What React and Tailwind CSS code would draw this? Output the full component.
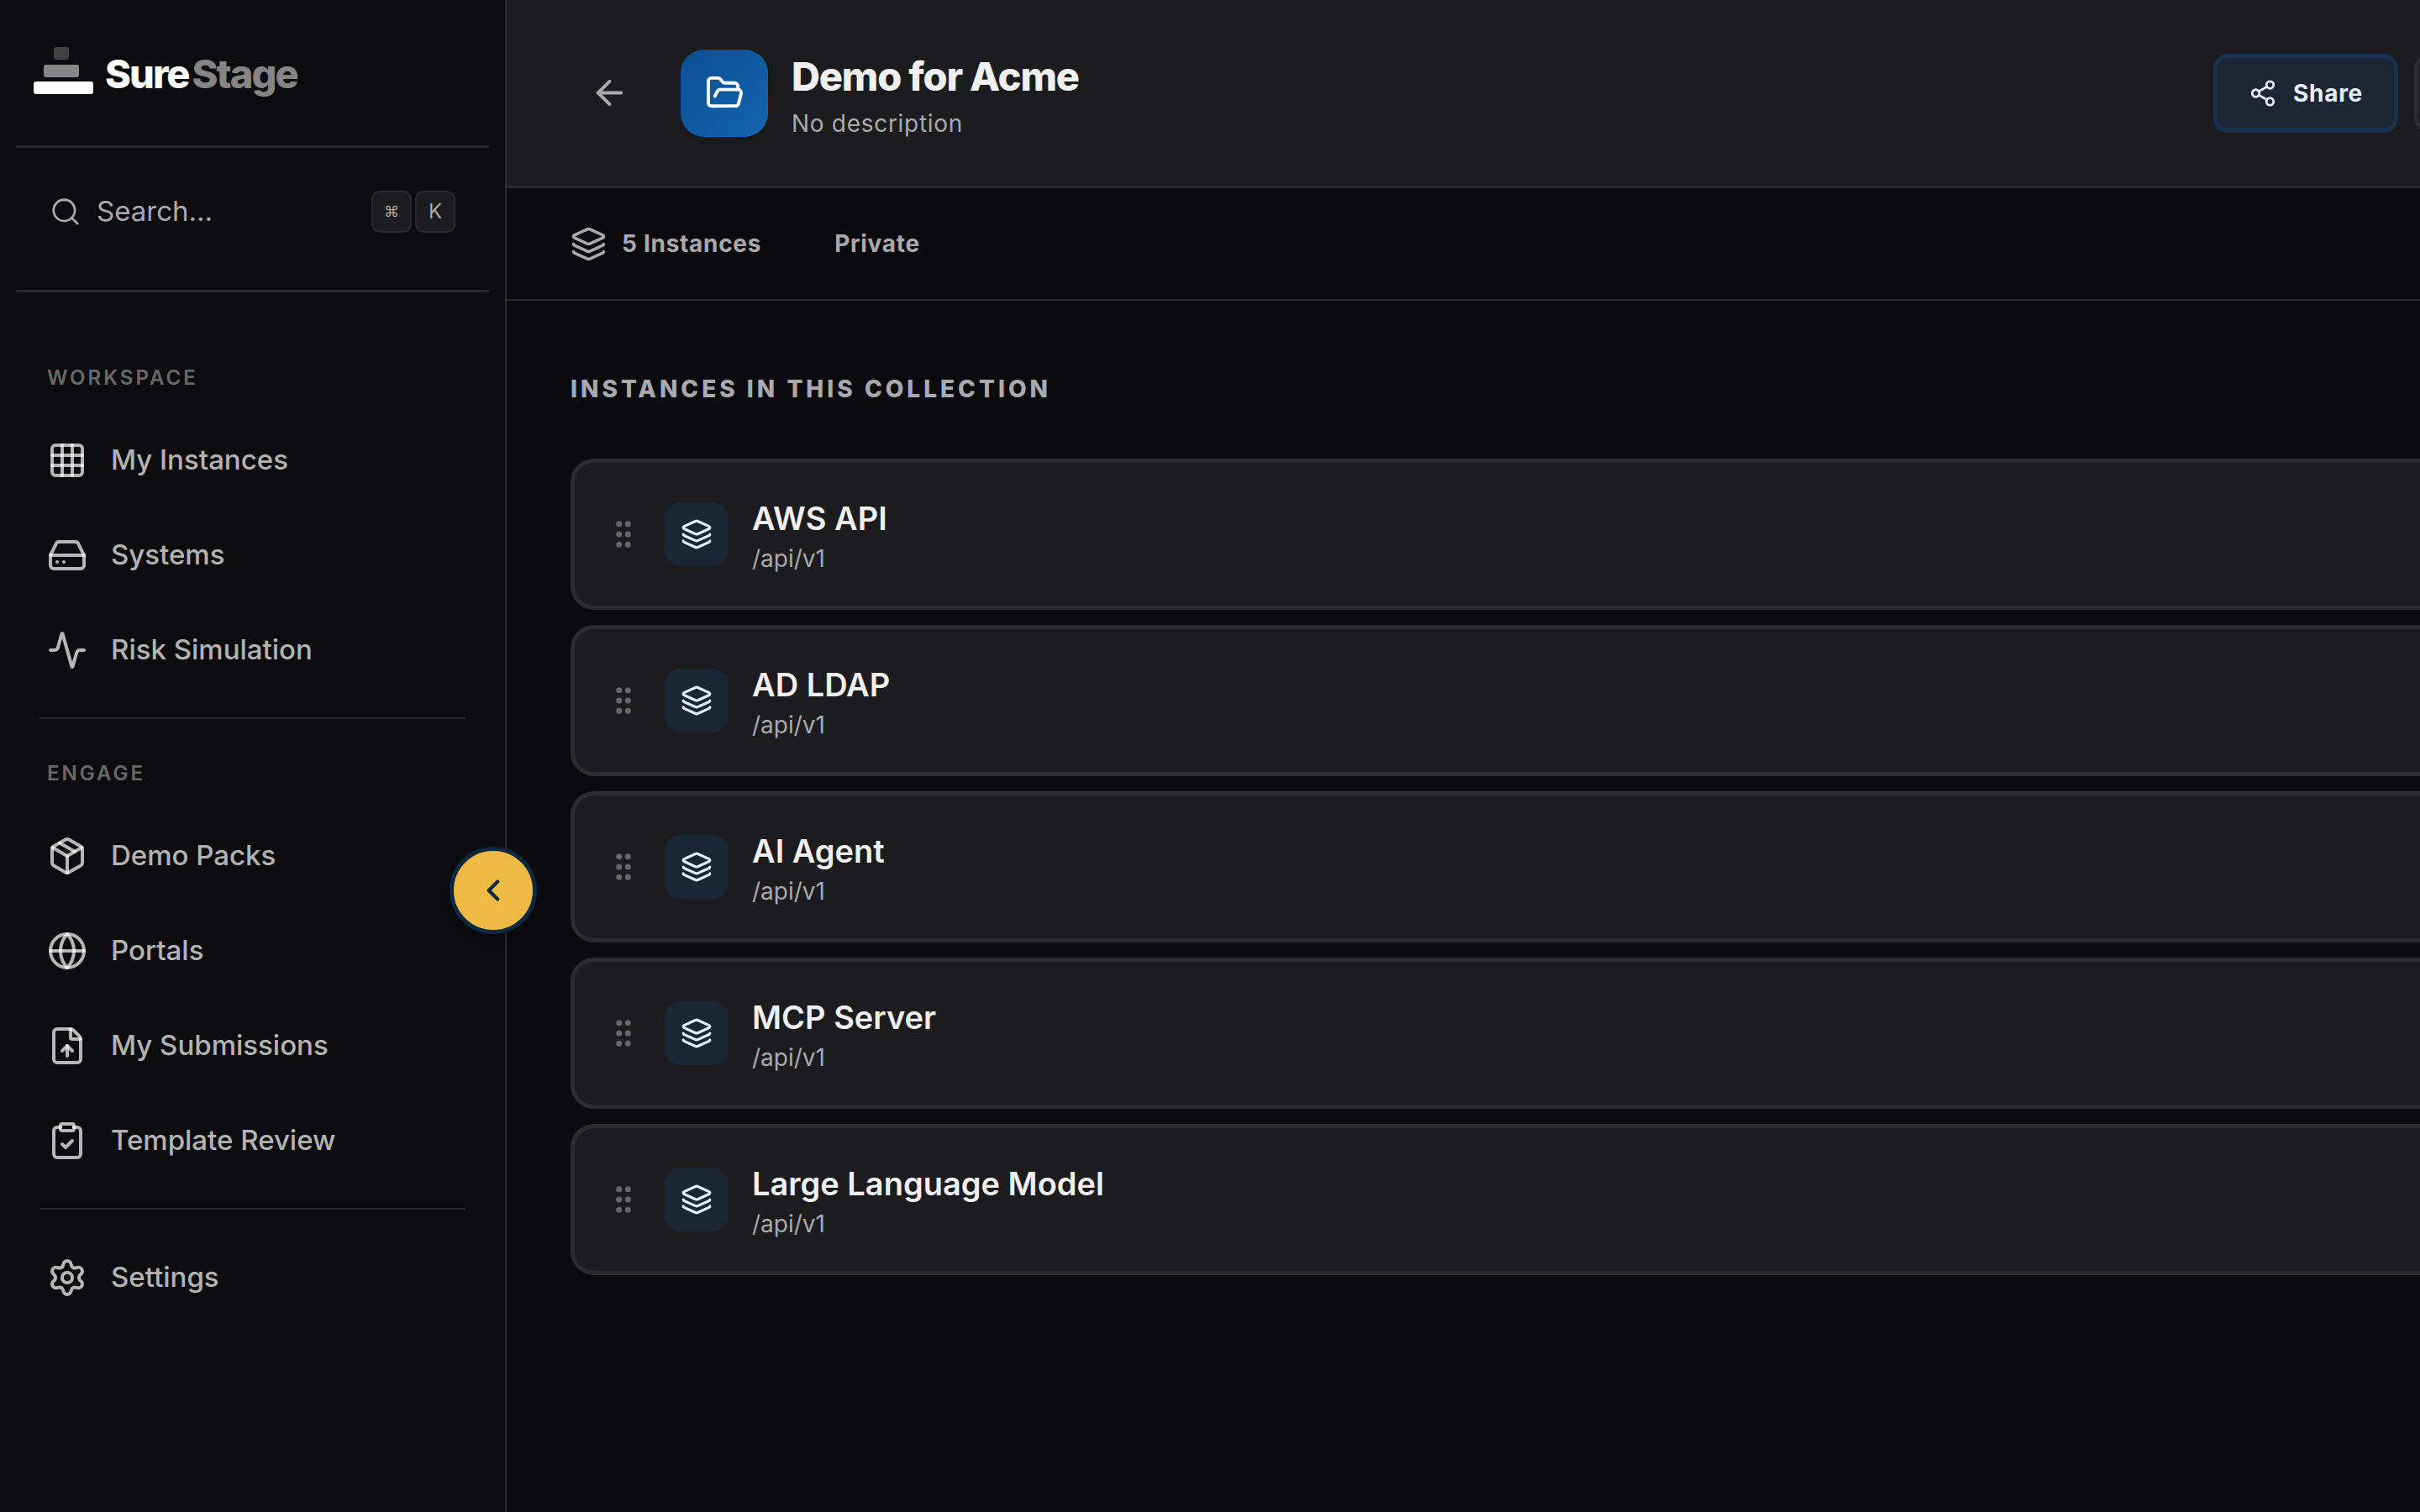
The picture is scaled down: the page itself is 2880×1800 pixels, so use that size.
import {
    Activity,
    ArrowLeft,
    ChevronLeft,
    ClipboardCheck,
    FileUp,
    FolderOpen,
    Globe,
    Grid3x3,
    GripVertical,
    HardDrive,
    Layers,
    Package,
    Search,
    Settings,
    Share2,
} from "lucide-react";

const workspaceLinks = [
    { label: "My Instances", icon: Grid3x3 },
    { label: "Systems", icon: HardDrive },
    { label: "Risk Simulation", icon: Activity },
];

const engageLinks = [
    { label: "Demo Packs", icon: Package },
    { label: "Portals", icon: Globe },
    { label: "My Submissions", icon: FileUp },
    { label: "Template Review", icon: ClipboardCheck },
];

const instances = [
    { name: "AWS API", path: "/api/v1" },
    { name: "AD LDAP", path: "/api/v1" },
    { name: "AI Agent", path: "/api/v1" },
    { name: "MCP Server", path: "/api/v1" },
    { name: "Large Language Model", path: "/api/v1" },
];

const Logo = () => (
    <a href="#" className="flex h-[173px] items-center gap-[14px] px-[21px] text-[47px] font-extrabold tracking-[-2px]">
        <svg width="71" height="62" viewBox="0 0 71 62" aria-hidden="true">
            <rect x="24" y="0" width="18" height="15" rx="3" fill="#414141" />
            <rect x="12" y="21" width="42" height="15" rx="3" fill="#858585" />
            <rect x="0" y="41" width="71" height="15" rx="3" fill="#fff" />
        </svg>
        <span className="flex gap-1 pt-1 text-white">
            Sure<span className="text-[#858585]">Stage</span>
        </span>
    </a>
);

const NavLink = ({ label, icon: Icon }) => (
    <a href="#" className="flex h-[113px] items-center gap-7 px-[9px] text-[33px] font-medium text-white/70">
        <Icon size={48} strokeWidth={2} />
        {label}
    </a>
);

const NavHeading = ({ children }) => (
    <h2 className="px-[9px] text-2xl leading-[82px] font-semibold tracking-[3px] text-white/40">
        {children}
    </h2>
);

const Divider = () => <hr className="my-6 border-t-2 border-[#28282a]" />;

const Kbd = ({ children }) => (
    <kbd className="flex h-[50px] w-12 items-center justify-center rounded-[10px] border-2 border-[#2a2a2c] bg-[#1c1c1e] font-['Inter','DejaVu_Sans',sans-serif]">
        {children}
    </kbd>
);

const Sidebar = () => (
    <aside className="relative w-[603px] shrink-0 border-r-2 border-[#2a2a2c] bg-[#0c0c0e] px-[19px]">
        <Logo />
        <button
            type="button"
            className="flex h-[175px] w-full items-center border-y-3 border-[#28282a] px-10 pb-[18px] text-[33px] text-[#a9a9ae]"
        >
            <Search size={38} strokeWidth={1.75} />
            <span className="ml-[18px]">Search...</span>
            <span className="ml-auto flex gap-1 text-2xl">
                <Kbd>
                    <span className="text-lg">⌘</span>
                </Kbd>
                <Kbd>K</Kbd>
            </span>
        </button>
        <nav className="px-7 pt-[61px]">
            <NavHeading>WORKSPACE</NavHeading>
            {workspaceLinks.map((link) => (
                <NavLink key={link.label} {...link} />
            ))}
            <Divider />
            <NavHeading>ENGAGE</NavHeading>
            {engageLinks.map((link) => (
                <NavLink key={link.label} {...link} />
            ))}
            <Divider />
            <NavLink label="Settings" icon={Settings} />
        </nav>
        <button
            type="button"
            aria-label="Collapse sidebar"
            className="absolute top-[1008px] -right-[38px] flex size-[104px] items-center justify-center rounded-full border-[5px] border-[#0b2a40] bg-[#efbb45] text-[#0b2a40] shadow-lg"
        >
            <ChevronLeft size={42} strokeWidth={2.5} />
        </button>
    </aside>
);

const Header = () => (
    <header className="flex h-[224px] items-center border-b-3 border-[#2a2a2c] bg-[#1c1c1e] px-[76px]">
        <button type="button" aria-label="Back" className="flex size-[92px] items-center justify-center text-[#a9a9ae]">
            <ArrowLeft size={47} strokeWidth={2} />
        </button>
        <div className="ml-[39px] flex size-[104px] items-center justify-center rounded-[28px] bg-linear-to-br from-[#0b4f91] to-[#1364b0] text-white shadow-lg">
            <FolderOpen size={47} strokeWidth={2} />
        </div>
        <div className="ml-7">
            <h1 className="text-[47px] leading-[73px] font-extrabold tracking-tight text-[#f0f0f2]">Demo for Acme</h1>
            <p className="text-[28px] leading-[41px] tracking-wide text-[#a9a9ae]">No description</p>
        </div>
        <div className="ml-auto flex gap-[19px]">
            <button
                type="button"
                className="flex h-[94px] items-center gap-[19px] rounded-[18px] border-[5px] border-[#1a3152] bg-[#1d2635] px-[37px] text-[28px] font-bold tracking-wide text-[#e6efff]"
            >
                <Share2 size={34} strokeWidth={2} />
                Share
            </button>
            <button
                type="button"
                aria-label="Edit collection"
                className="h-[94px] w-[151px] rounded-[18px] border-[5px] border-[#2c2c30]"
            />
        </div>
    </header>
);

const InstanceCard = ({ name, path }) => (
    <li className="flex h-[180px] items-center rounded-[28px] border-[5px] border-[#2c2c2f] bg-[#1c1c1e] px-[37px]">
        <GripVertical size={42} strokeWidth={2} className="text-[#66666c]" />
        <div className="ml-7 flex size-[76px] items-center justify-center rounded-[19px] bg-[#192634] text-[#e6efff]">
            <Layers size={38} strokeWidth={2} />
        </div>
        <div className="ml-7">
            <h3 className="text-[38px] leading-[59px] font-semibold text-[#f0f0f2]">{name}</h3>
            <p className="text-[28px] leading-[37px] text-[#a9a9ae]">{path}</p>
        </div>
    </li>
);

const App = () => {
    return (
        <div className="flex min-h-screen overflow-hidden bg-[#0b0b0d] font-['Inter',sans-serif]">
            <Sidebar />
            <main className="min-w-0 flex-1">
                {/* the content pane is wider than the space left beside the sidebar */}
                <div className="w-[calc(100%+220px)]">
                    <Header />
                    <div className="flex h-[134px] items-center border-b-2 border-[#28282a] px-[76px] text-[28px] font-bold tracking-wide text-[#a9a9ae]">
                        <Layers size={43} strokeWidth={2} />
                        <span className="ml-[18px]">{instances.length} Instances</span>
                        <span className="ml-[87px]">Private</span>
                    </div>
                    <section className="p-[76px]">
                        <h2 className="mb-[54px] text-[28px] leading-[58px] font-extrabold tracking-[4px] text-[#a9a9ae]">
                            INSTANCES IN THIS COLLECTION
                        </h2>
                        <ul className="flex flex-col gap-[18px]">
                            {instances.map((instance) => (
                                <InstanceCard key={instance.name} {...instance} />
                            ))}
                        </ul>
                    </section>
                </div>
            </main>
        </div>
    );
};

export default App;
